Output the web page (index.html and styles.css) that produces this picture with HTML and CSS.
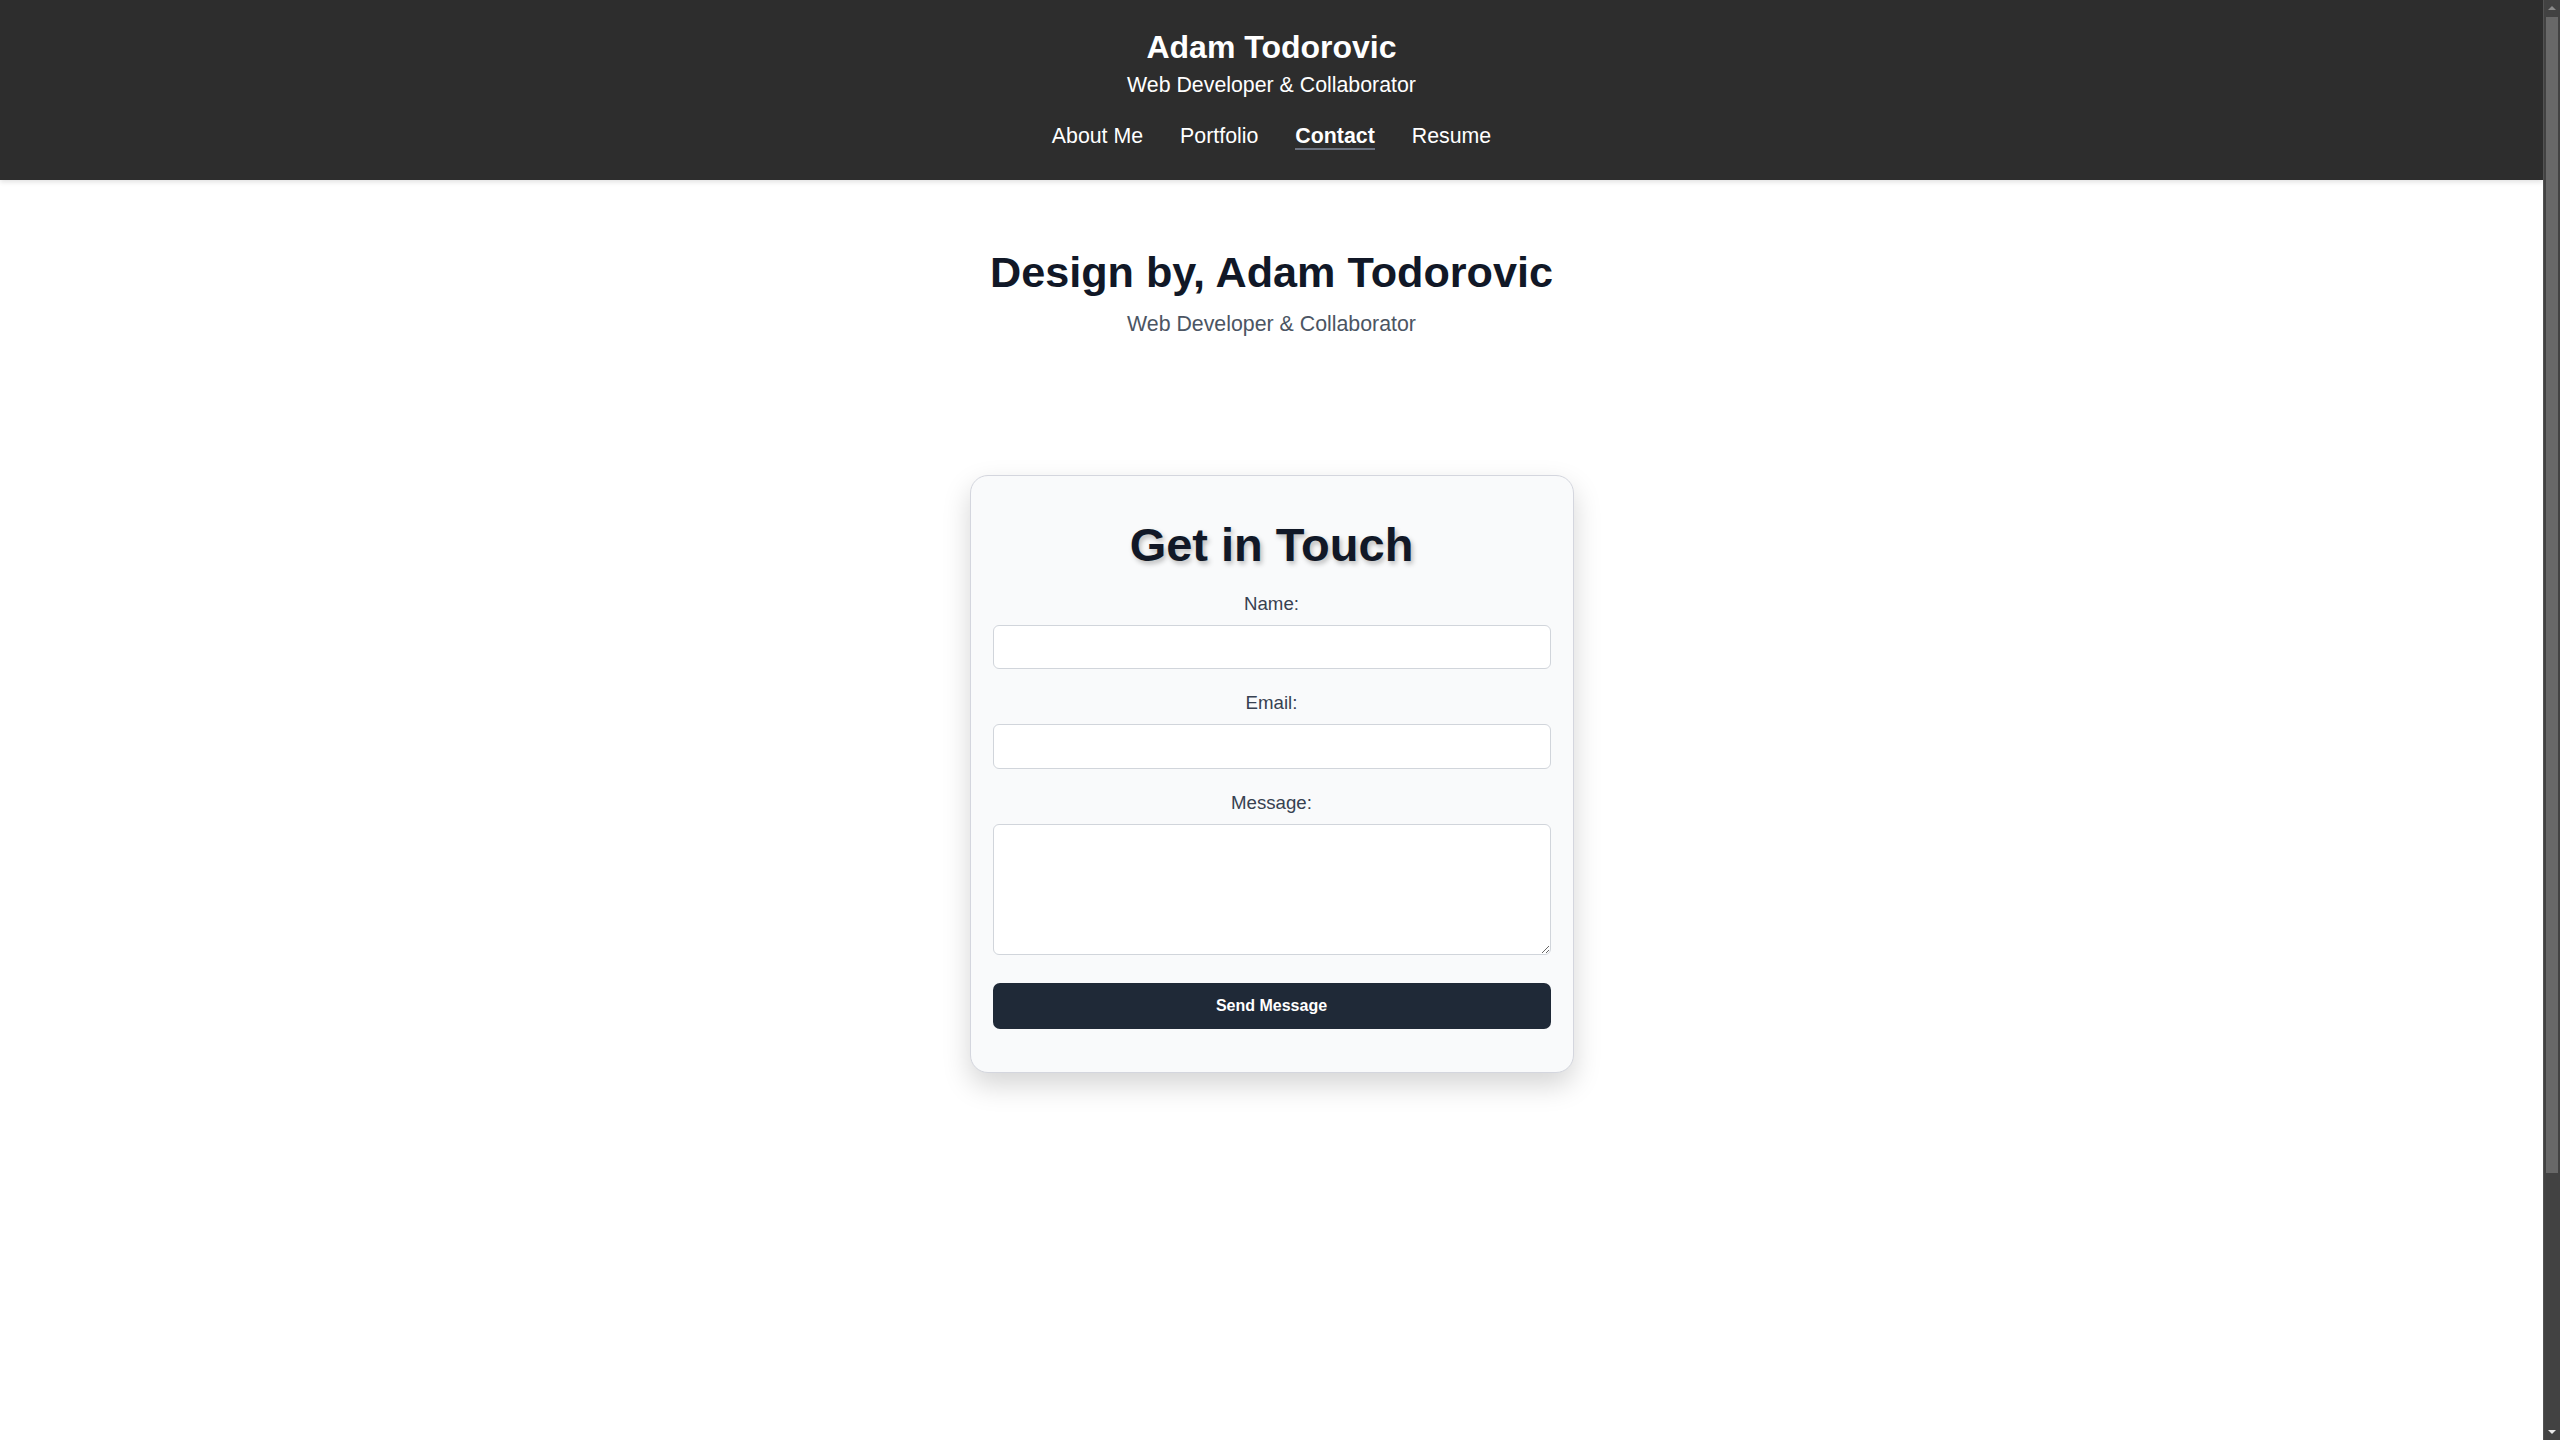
FILE: index.html
```html
<!DOCTYPE html>
<html lang="en">
<head>
<meta charset="utf-8">
<title>Contact - Adam Todorovic</title>
<link rel="stylesheet" href="styles.css">
</head>
<body>
<header class="site-header">
  <h1 class="site-title">Adam Todorovic</h1>
  <p class="site-tagline">Web Developer &amp; Collaborator</p>
  <nav class="site-nav">
    <a href="#" class="nav-link">About Me</a>
    <a href="#" class="nav-link">Portfolio</a>
    <a href="#" class="nav-link active">Contact</a>
    <a href="#" class="nav-link">Resume</a>
  </nav>
</header>
<main class="page">
  <section class="intro">
    <h2 class="intro-title">Design by, Adam Todorovic</h2>
    <p class="intro-sub">Web Developer &amp; Collaborator</p>
  </section>
  <section class="contact-card">
    <h3 class="card-title">Get in Touch</h3>
    <form class="contact-form">
      <div class="field">
        <label class="field-label" for="name">Name:</label>
        <input class="field-input" id="name" type="text">
      </div>
      <div class="field">
        <label class="field-label" for="email">Email:</label>
        <input class="field-input" id="email" type="email">
      </div>
      <div class="field">
        <label class="field-label" for="message">Message:</label>
        <textarea class="field-input field-textarea" id="message"></textarea>
      </div>
      <button type="button" class="send-btn">Send Message</button>
    </form>
  </section>
</main>
<div class="scrollbar" aria-hidden="true">
  <span class="sb-arrow sb-up"></span>
  <span class="sb-thumb"></span>
  <span class="sb-fill"></span>
  <span class="sb-arrow sb-down"></span>
</div>
</body>
</html>
```

FILE: styles.css
```css
html {
  background: #ffffff;
}

body {
  margin: 0 17px 0 0;
  font-family: "Liberation Sans", Arial, sans-serif;
  color: #111827;
}

.site-header {
  background: #2d2d2d;
  color: #ffffff;
  text-align: center;
  padding: 27.6px 0 30px;
  box-shadow: 0 2px 5px rgba(0, 0, 0, 0.12);
  position: relative;
  z-index: 1;
}

.site-title {
  margin: 0;
  font-size: 32px;
  line-height: 38px;
  font-weight: 700;
}

.site-tagline {
  margin: 6.3px 0 0;
  font-size: 21.33px;
  line-height: 26px;
}

.site-nav {
  margin-top: 26px;
  display: flex;
  justify-content: center;
  gap: 37px;
}

.nav-link {
  color: #ffffff;
  text-decoration: none;
  font-size: 21.33px;
  line-height: 24px;
  border-bottom: 2px solid transparent;
}

.nav-link.active {
  font-weight: 700;
  border-bottom-color: #6b7280;
}

.page {
  min-height: 1572px;
  display: flex;
  flex-direction: column;
  align-items: center;
}

.intro {
  text-align: center;
  margin-top: 67.6px;
}

.intro-title {
  margin: 0;
  font-size: 43.2px;
  line-height: 51px;
  font-weight: 700;
  color: #111827;
}

.intro-sub {
  margin: 10.6px 0 0;
  font-size: 21.33px;
  line-height: 30px;
  color: #4b5563;
}

.contact-card {
  margin-top: 135.6px;
  width: 604px;
  box-sizing: border-box;
  background: #f9fafb;
  border: 1px solid #d4d6de;
  border-radius: 18px;
  padding: 41px 22px 43px;
  box-shadow: 0 12px 28px rgba(0, 0, 0, 0.17);
  text-align: center;
}

.card-title {
  margin: 0 0 20px;
  font-size: 47px;
  line-height: 56px;
  font-weight: 700;
  color: #111827;
  text-shadow: 2px 3px 5px rgba(0, 0, 0, 0.25);
}

.contact-form {
  display: flex;
  flex-direction: column;
}

.field {
  display: flex;
  flex-direction: column;
  margin-bottom: 23px;
}

.field-label {
  font-size: 18.67px;
  line-height: 22px;
  color: #374151;
  margin-bottom: 10px;
}

.field-input {
  box-sizing: border-box;
  height: 44.5px;
  width: 100%;
  border: 1px solid #d1d5db;
  border-radius: 6px;
  background: #ffffff;
  font-family: inherit;
  font-size: 18px;
  padding: 8px 12px;
  margin: 0;
}

.field-textarea {
  height: 131px;
  resize: vertical;
}

.field:last-of-type {
  margin-bottom: 28px;
}

.send-btn {
  height: 46.7px;
  border: none;
  border-radius: 7px;
  background: #1f2937;
  color: #ffffff;
  font-family: inherit;
  font-weight: 700;
  font-size: 16px;
  cursor: pointer;
}

/* simulated window scrollbar, drawn over the right edge */
.scrollbar {
  position: fixed;
  top: 0;
  right: 0;
  width: 17px;
  height: 100vh;
  box-sizing: border-box;
  background: #424242;
  border-left: 1px solid #535353;
  display: flex;
  flex-direction: column;
  align-items: center;
  z-index: 10;
}

.sb-arrow {
  flex: none;
  height: 16.5px;
  width: 100%;
  display: flex;
  align-items: center;
  justify-content: center;
}

.sb-arrow::before {
  content: "";
  width: 0;
  height: 0;
  border-left: 4px solid transparent;
  border-right: 4px solid transparent;
}

.sb-up::before {
  border-bottom: 4px solid #8a8a8a;
}

.sb-down::before {
  border-top: 4px solid #e8e8e8;
}

.sb-thumb {
  flex: none;
  width: 12px;
  height: 1156px;
  background: #686868;
}

.sb-fill {
  flex: 1;
}
```
